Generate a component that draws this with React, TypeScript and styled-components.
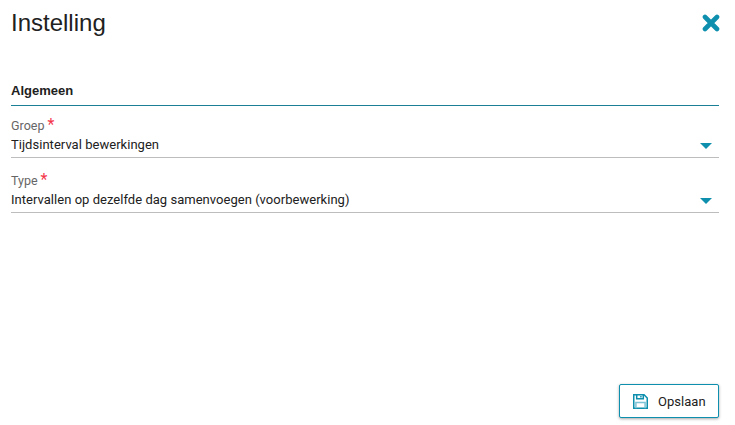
import React from 'react'
import styled, { createGlobalStyle } from 'styled-components'

const teal = '#0e8fae'

const GlobalStyle = createGlobalStyle`
  html, body {
    margin: 0;
    padding: 0;
    background: #fff;
  }
  body {
    font-family: Roboto, "Liberation Sans", sans-serif;
    color: #212121;
  }
`

const Page = styled.div`
  width: 735px;
  height: 425px;
  box-sizing: border-box;
  padding: 0 16px 7px 11px;
  display: flex;
  flex-direction: column;
  overflow: hidden;
`

const Header = styled.header`
  height: 46px;
  display: flex;
  align-items: center;
  justify-content: space-between;
`

const Title = styled.h1`
  margin: 0;
  font-family: "Liberation Sans", Arial, sans-serif;
  font-size: 24px;
  font-weight: 400;
  color: #212121;
`

const CloseButton = styled.button`
  display: flex;
  border: 0;
  padding: 0;
  background: none;
  color: ${teal};
  margin-right: -1px;
`

const Section = styled.section`
  flex: 1;
  padding-top: 34px;
`

const SectionTitle = styled.h2`
  margin: 0 0 12px;
  height: 26px;
  box-sizing: border-box;
  border-bottom: 1px solid #1a8095;
  font-family: "Liberation Sans", Arial, sans-serif;
  font-size: 13px;
  font-weight: 700;
  line-height: 22px;
  color: #212121;
`

const Field = styled.div`
  height: 40px;
  box-sizing: border-box;
  border-bottom: 1px solid #bdbdbd;
  margin-bottom: 15px;
  position: relative;
`

const Label = styled.label`
  display: block;
  height: 15px;
  font-size: 12.5px;
  line-height: 13px;
  color: #666;
`

const Required = styled.span`
  color: #f4364c;
  font-size: 16px;
  line-height: 13px;
  margin-left: 3px;
`

const Value = styled.div`
  margin-top: 2px;
  font-size: 13px;
  line-height: 20px;
  letter-spacing: 0.03px;
  color: #212121;
`

const Caret = styled.span`
  position: absolute;
  right: 7px;
  top: 25px;
  width: 0;
  height: 0;
  border-left: 6px solid transparent;
  border-right: 6px solid transparent;
  border-top: 6px solid ${teal};
`

const Footer = styled.footer`
  display: flex;
  justify-content: flex-end;
`

const SaveButton = styled.button`
  width: 100px;
  height: 34px;
  box-sizing: border-box;
  display: flex;
  align-items: center;
  gap: 10px;
  padding: 0 0 0 13px;
  background: #fff;
  border: 1px solid ${teal};
  border-radius: 2px;
  box-shadow: 0 1px 3px rgba(0, 0, 0, 0.35);
  font-family: Roboto, sans-serif;
  font-size: 13px;
  letter-spacing: 0.03px;
  color: #212121;
`

const CloseIcon = () => (
  <svg width="18" height="18" viewBox="0 0 18 18" fill="none" stroke="currentColor" strokeWidth="4.6" strokeLinecap="round">
    <path d="M3 3l12 12M15 3L3 15" />
  </svg>
)

const SaveIcon = () => (
  <svg width="15" height="15" viewBox="0 0 15 15" fill="none" stroke={teal} strokeWidth="1.5">
    <path d="M.75.75h10.3l3.2 3.2v10.3H.75z" />
    <path d="M3.7.75v4.1h6.6V.75" />
    <path d="M2.9 14.25V8.4h9.2v5.85" stroke="#7cc3d6" />
    <path d="M7.9 1.9v1.7" />
  </svg>
)

const fields = [
  { label: 'Groep', value: 'Tijdsinterval bewerkingen' },
  { label: 'Type', value: 'Intervallen op dezelfde dag samenvoegen (voorbewerking)' },
]

export default function App() {
  return (
    <Page>
      <GlobalStyle />
      <Header>
        <Title>Instelling</Title>
        <CloseButton aria-label="Sluiten">
          <CloseIcon />
        </CloseButton>
      </Header>
      <Section>
        <SectionTitle>Algemeen</SectionTitle>
        {fields.map((field) => (
          <Field key={field.label}>
            <Label>
              {field.label}
              <Required>*</Required>
            </Label>
            <Value>{field.value}</Value>
            <Caret />
          </Field>
        ))}
      </Section>
      <Footer>
        <SaveButton>
          <SaveIcon />
          Opslaan
        </SaveButton>
      </Footer>
    </Page>
  )
}
